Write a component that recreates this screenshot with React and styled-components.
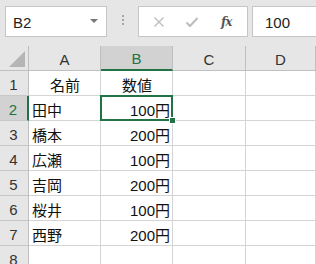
import React from 'react';
import styled, { createGlobalStyle } from 'styled-components';

const GREEN = '#217346';

const GlobalStyle = createGlobalStyle`
  html, body {
    margin: 0;
    padding: 0;
    background: #e6e6e6;
  }
  body {
    font-family: "Liberation Sans", "Noto Sans CJK JP", sans-serif;
    width: 316px;
    height: 264px;
    overflow: hidden;
  }
`;

const Toolbar = styled.div`
  height: 46px;
  display: flex;
  align-items: flex-start;
  padding-top: 6px;
  padding-left: 5px;
  box-sizing: border-box;
  background: #e6e6e6;
`;

const NameBox = styled.div`
  width: 102px;
  height: 31px;
  box-sizing: border-box;
  background: #fff;
  border: 1px solid #c6c6c6;
  display: flex;
  align-items: center;
  justify-content: space-between;
  padding: 2px 8px 0 7px;
  font-size: 15px;
  color: #222;
`;

const Caret = styled.span`
  width: 0;
  height: 0;
  border-left: 4px solid transparent;
  border-right: 4px solid transparent;
  border-top: 4px solid #777;
  margin-top: -3px;
`;

const Grip = styled.div`
  width: 31px;
  height: 31px;
  display: flex;
  flex-direction: column;
  align-items: center;
  justify-content: center;
  gap: 2px;
  padding-bottom: 3px;
  box-sizing: border-box;
`;

const GripDot = styled.span`
  width: 2px;
  height: 2px;
  background: #a6a6a6;
`;

const FormulaButtons = styled.div`
  width: 110px;
  height: 31px;
  box-sizing: border-box;
  background: #fff;
  border: 1px solid #c6c6c6;
  display: flex;
  align-items: center;
  padding-left: 14px;
  gap: 20px;
`;

const Fx = styled.span`
  font-family: "DejaVu Serif", "Liberation Serif", serif;
  font-style: italic;
  font-weight: bold;
  font-size: 12px;
  color: #555;
  letter-spacing: -1px;
  margin-left: 2px;
`;

const FormulaInput = styled.div`
  flex: 1;
  margin-left: 4px;
  height: 31px;
  box-sizing: border-box;
  background: #fff;
  border: 1px solid #c6c6c6;
  border-right: none;
  display: flex;
  align-items: center;
  padding: 2px 0 0 12px;
  font-size: 15px;
  color: #222;
`;

const Sheet = styled.div`
  display: grid;
  grid-template-columns: 29px 72px 72px 73px 1fr;
  grid-auto-rows: 25px;
  background: #fff;
`;

const Corner = styled.div`
  position: relative;
  background: #e6e6e6;
  border-right: 1px solid #bfbfbf;
  border-bottom: 1px solid #bfbfbf;
  box-sizing: border-box;
`;

const CornerTriangle = styled.span`
  position: absolute;
  right: 3px;
  bottom: 3px;
  width: 0;
  height: 0;
  border-left: 16px solid transparent;
  border-bottom: 16px solid #b5b5b5;
`;

const ColHead = styled.div`
  background: ${({ active }) => (active ? '#d2d2d2' : '#e6e6e6')};
  color: ${({ active }) => (active ? GREEN : '#333')};
  border-right: 1px solid #bfbfbf;
  border-bottom: ${({ active }) => (active ? `2px solid ${GREEN}` : '1px solid #bfbfbf')};
  box-sizing: border-box;
  display: flex;
  align-items: center;
  justify-content: center;
  font-size: 15px;
  padding-top: 2px;
`;

const RowHead = styled.div`
  background: ${({ active }) => (active ? '#d2d2d2' : '#e6e6e6')};
  color: ${({ active }) => (active ? GREEN : '#333')};
  border-right: ${({ active }) => (active ? `2px solid ${GREEN}` : '1px solid #bfbfbf')};
  border-bottom: 1px solid #c8c8c8;
  box-sizing: border-box;
  display: flex;
  align-items: center;
  justify-content: center;
  font-size: 15px;
  padding: 2px 1px 0 0;
`;

const Cell = styled.div`
  position: relative;
  z-index: ${({ selected }) => (selected ? 1 : 'auto')};
  border-right: 1px solid #d4d4d4;
  border-bottom: 1px solid #d4d4d4;
  box-sizing: border-box;
  display: flex;
  align-items: center;
  justify-content: ${({ align }) =>
    align === 'right' ? 'flex-end' : align === 'center' ? 'center' : 'flex-start'};
  padding: 2px 2px 0 3px;
  font-size: 15px;
  color: #111;
  white-space: nowrap;
`;

const Selection = styled.span`
  position: absolute;
  left: -1px;
  top: -1px;
  right: -1px;
  bottom: -1px;
  border: 2px solid ${GREEN};
  pointer-events: none;
`;

const FillHandle = styled.span`
  position: absolute;
  right: -4px;
  bottom: -4px;
  width: 5px;
  height: 5px;
  background: ${GREEN};
  border: 1px solid #fff;
`;

const columns = ['A', 'B', 'C', 'D'];

const rows = [
  { name: '名前', value: '数値', header: true },
  { name: '田中', value: '100円' },
  { name: '橋本', value: '200円' },
  { name: '広瀬', value: '100円' },
  { name: '吉岡', value: '200円' },
  { name: '桜井', value: '100円' },
  { name: '西野', value: '200円' },
  { name: '', value: '' },
];

const CrossIcon = () => (
  <svg width="12" height="12" viewBox="0 0 12 12">
    <path d="M1.5 1.5 L10.5 10.5 M10.5 1.5 L1.5 10.5" stroke="#bdbdbd" strokeWidth="1.4" fill="none" />
  </svg>
);

const CheckIcon = () => (
  <svg width="14" height="12" viewBox="0 0 14 12">
    <path d="M1.5 6.5 L5 10 L12.5 2" stroke="#bdbdbd" strokeWidth="2" fill="none" />
  </svg>
);

const App = () => (
  <>
    <GlobalStyle />
    <Toolbar>
      <NameBox>
        B2
        <Caret />
      </NameBox>
      <Grip>
        <GripDot />
        <GripDot />
        <GripDot />
      </Grip>
      <FormulaButtons>
        <CrossIcon />
        <CheckIcon />
        <Fx>fx</Fx>
      </FormulaButtons>
      <FormulaInput>100</FormulaInput>
    </Toolbar>
    <Sheet>
      <Corner>
        <CornerTriangle />
      </Corner>
      {columns.map((c) => (
        <ColHead key={c} active={c === 'B'}>
          {c}
        </ColHead>
      ))}
      {rows.map((r, i) => (
        <React.Fragment key={i}>
          <RowHead active={i === 1}>{i + 1}</RowHead>
          <Cell align={r.header ? 'center' : 'left'}>{r.name}</Cell>
          <Cell align={r.header ? 'center' : 'right'} selected={i === 1}>
            {r.value}
            {i === 1 && (
              <>
                <Selection />
                <FillHandle />
              </>
            )}
          </Cell>
          <Cell />
          <Cell />
        </React.Fragment>
      ))}
    </Sheet>
  </>
);

export default App;
